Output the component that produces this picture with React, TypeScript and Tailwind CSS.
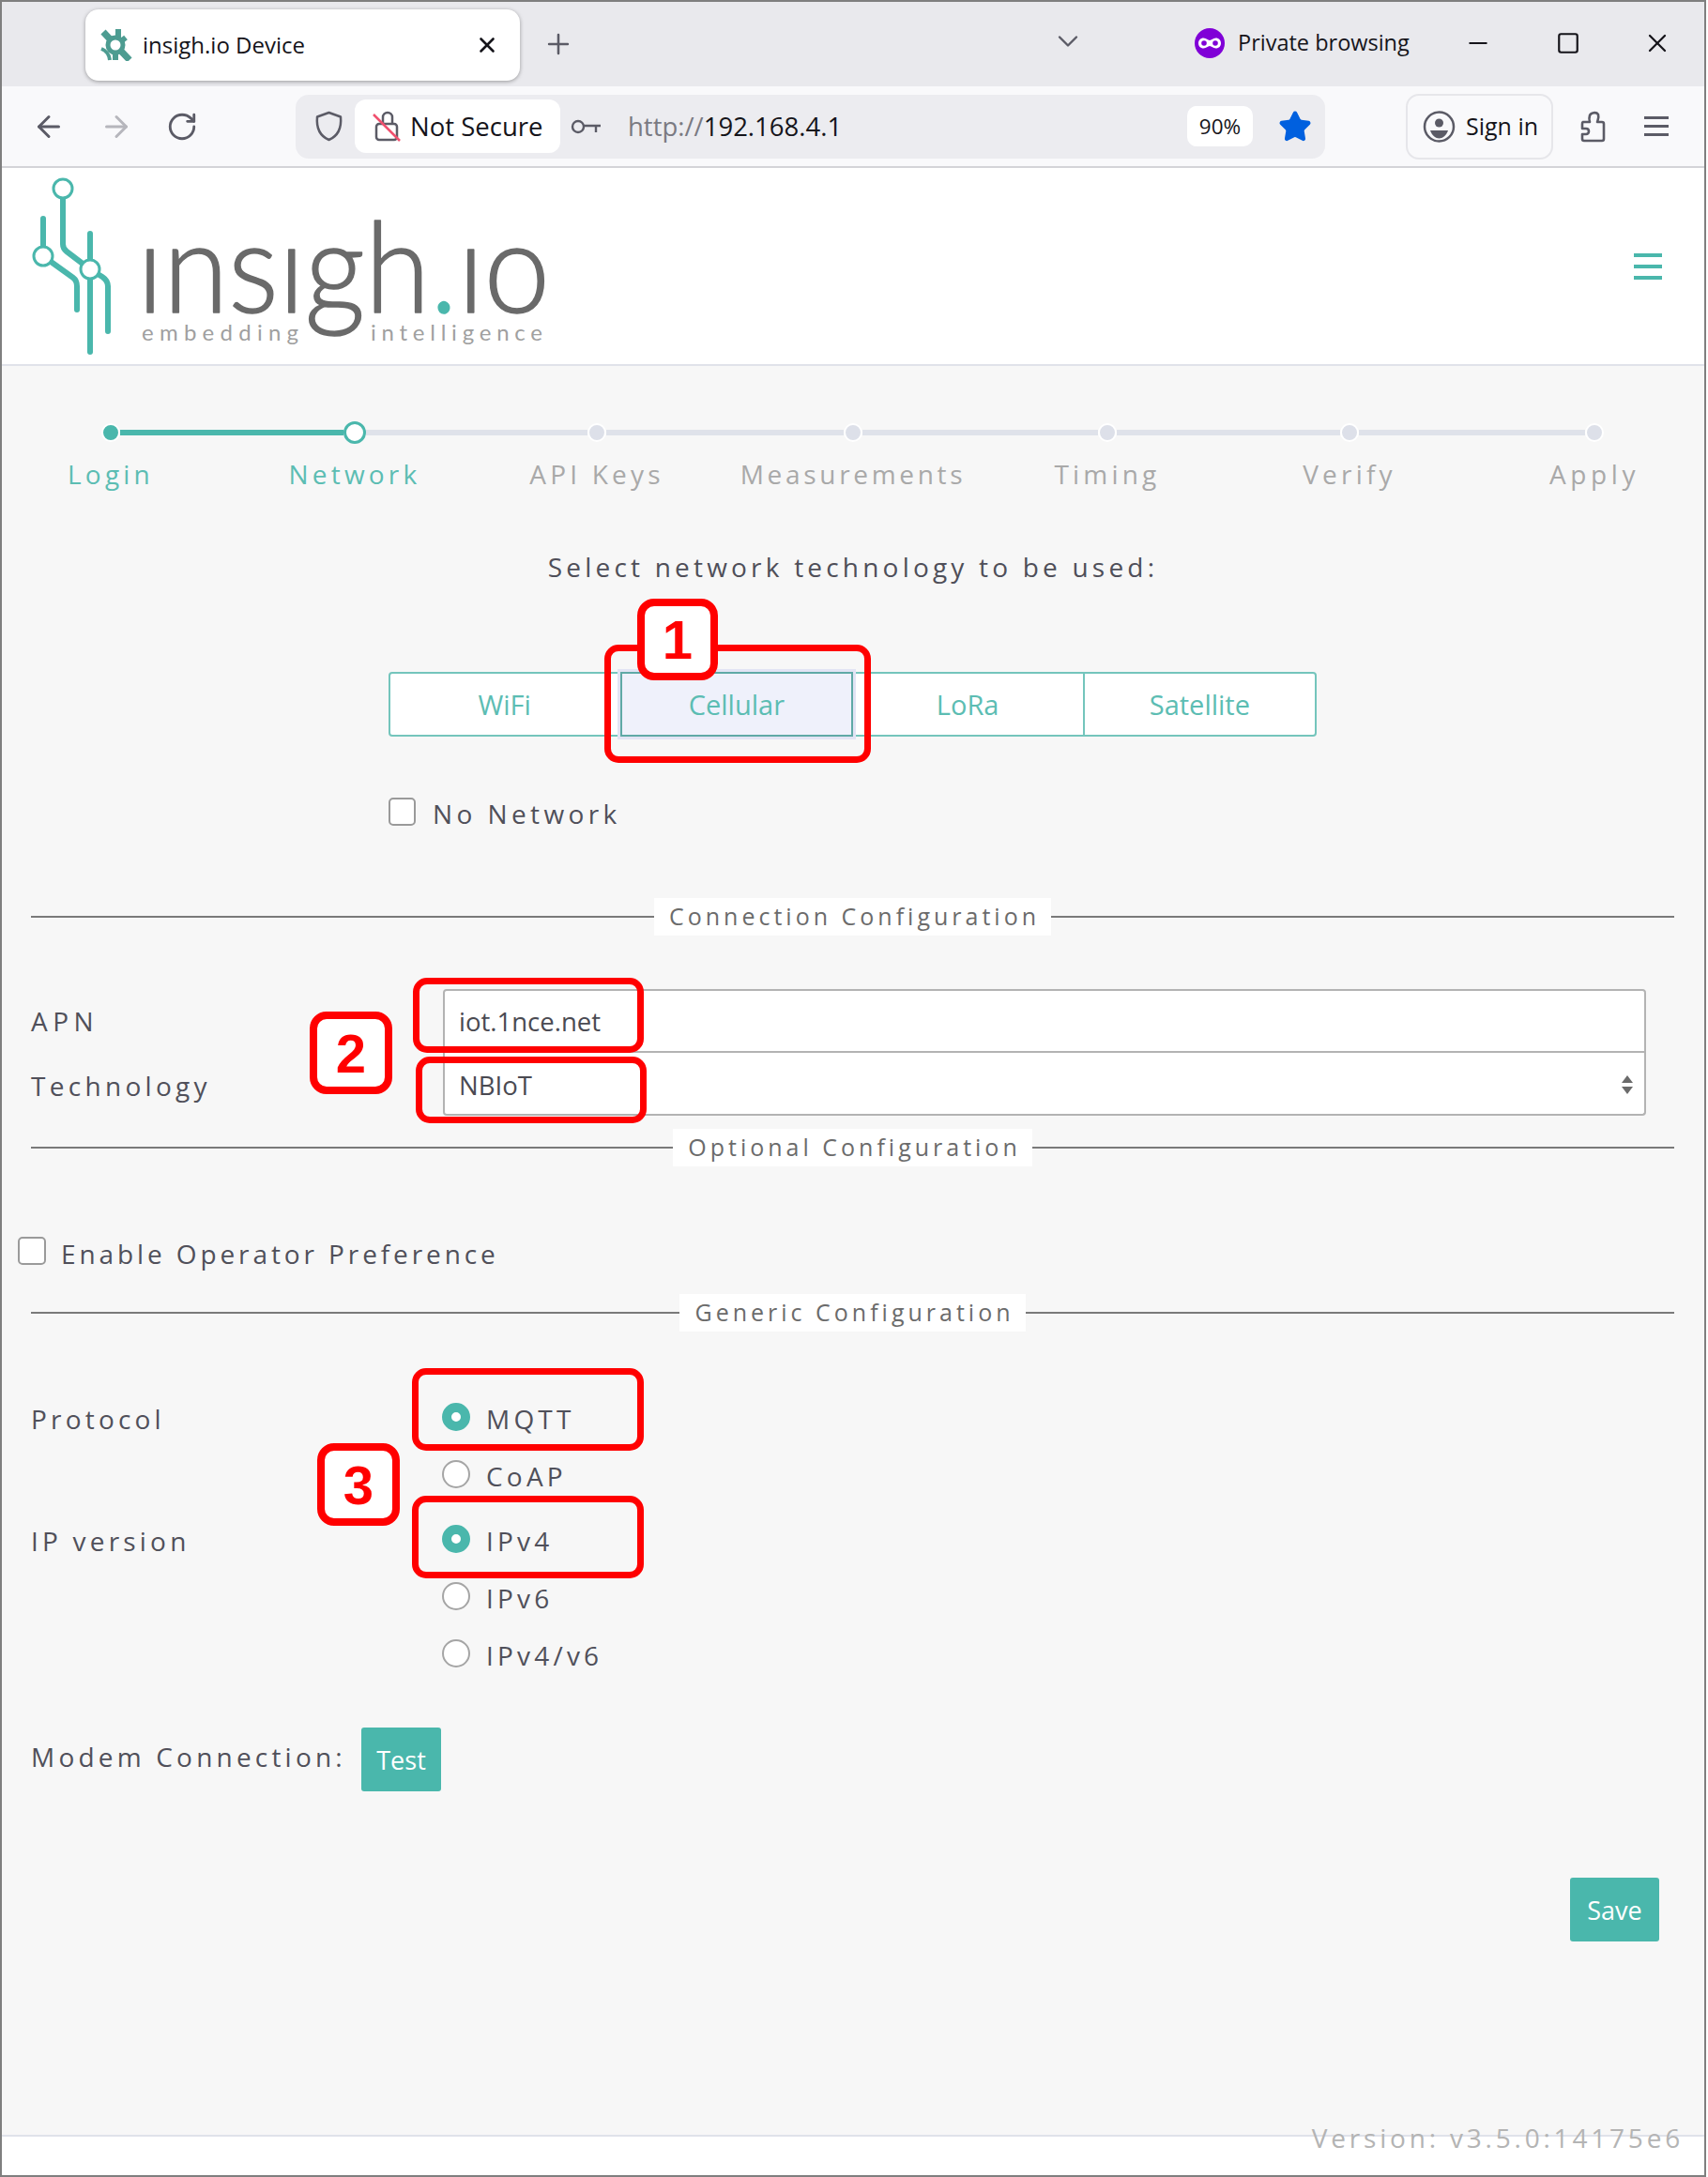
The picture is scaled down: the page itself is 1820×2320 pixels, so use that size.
import React from 'react';
import { ArrowLeft, ArrowRight, ChevronDown, Minus, Plus, RotateCw, Square, Star, X } from 'lucide-react';

const TEAL = '#4ab7ac';

const sans = { fontFamily: '"Open Sans", "Noto Sans", sans-serif' };

const steps = [
  { label: 'Login', gap: 'ml-0', color: 'text-[#5cbdb3] tracking-[4.2px]' },
  { label: 'Network', gap: 'ml-[90px]', color: 'text-[#5cbdb3] tracking-[4.2px]' },
  { label: 'API Keys', gap: 'ml-[88px]', color: 'text-[#a9a9a9] tracking-[4.2px]' },
  { label: 'Measurements', gap: 'ml-[103px]', color: 'text-[#a9a9a9] tracking-[3.7px]' },
  { label: 'Timing', gap: 'ml-[101px]', color: 'text-[#a9a9a9] tracking-[4.2px]' },
  { label: 'Verify', gap: 'ml-[88px]', color: 'text-[#a9a9a9] tracking-[4.2px]' },
  { label: 'Apply', gap: 'ml-[91px]', color: 'text-[#a9a9a9] tracking-[4.6px]' },
];

function Favicon() {
  return (
    <svg width="34" height="34" viewBox="0 0 34 34" fill="none" stroke="#4d9c91">
      <path d="M3 3L16 17L31 33" strokeWidth="7" />
      <path d="M19 0V10M27 9L22 13M16 26V33" strokeWidth="6" />
      <path d="M1 21Q9 24 10 33" strokeWidth="4" />
      <circle cx="16" cy="17" r="8" fill="#fff" strokeWidth="5" />
    </svg>
  );
}

function ShieldIcon() {
  return (
    <svg width="31" height="33" viewBox="0 0 31 33" fill="none" stroke="#5b5b66" strokeWidth="2.5">
      <path d="M15.5 2 L28 6.5 C29 18 25 27 15.5 31 C6 27 2 18 3 6.5 Z" strokeLinejoin="round" />
    </svg>
  );
}

function BrokenLock() {
  return (
    <svg width="30" height="33" viewBox="0 0 30 33" fill="none">
      <path d="M11 14V7a5 5 0 0 1 10 0v7" stroke="#5b5b66" strokeWidth="2.5" />
      <rect x="4" y="14" width="22" height="17" rx="3" stroke="#5b5b66" strokeWidth="2.5" />
      <path d="M1 4 L29 32" stroke="#f0506e" strokeWidth="2.5" />
    </svg>
  );
}

function KeyIcon() {
  return (
    <svg width="33" height="16" viewBox="0 0 33 16" fill="none" stroke="#5b5b66" strokeWidth="2.4">
      <circle cx="8" cy="8" r="6" />
      <path d="M14 7h18M27 7v7" />
    </svg>
  );
}

function PrivateMask() {
  return (
    <svg width="32" height="32" viewBox="0 0 32 32">
      <circle cx="16" cy="16" r="16" fill="#8000d7" />
      <path d="M9.5 10.5c3 0 4.5 2.5 6.5 2.5s3.500-2.500 6.500-2.500c3.500 0 5.500 2.500 5.500 5.500s-2 5.500-5.500 5.500c-3 0-4.500-2.500-6.500-2.500s-3.500 2.500-6.500 2.500C6 21.500 4 19 4 16s2-5.500 5.500-5.500z" fill="#fff" />
      <circle cx="10" cy="16" r="2.800" fill="#8000d7" />
      <circle cx="22" cy="16" r="2.800" fill="#8000d7" />
    </svg>
  );
}

function AccountIcon() {
  return (
    <svg width="35" height="34" viewBox="0 0 35 34" fill="none">
      <circle cx="17.500" cy="17" r="15.500" stroke="#5b5b66" strokeWidth="2.5" />
      <circle cx="17.500" cy="13" r="4.500" fill="#5b5b66" />
      <path d="M8 21h19c-1.500 5-6 8.500-9.500 8.500S9.500 26 8 21z" fill="#5b5b66" />
    </svg>
  );
}

function PuzzleIcon() {
  return (
    <svg width="28" height="34" viewBox="0 0 28 34" fill="none" stroke="#5b5b66" strokeWidth="2.6" strokeLinejoin="round">
      <path d="M4 12H11c-1-3-1-4 0-7c1-3 7-4 9-1c1 3 0 5-1 8H24a2 2 0 0 1 2 2V30a2 2 0 0 1-2 2H5a2 2 0 0 1-2-2V25H7c4 0 4-6 0-6H3V14a2 2 0 0 1 1-2z" />
    </svg>
  );
}

function Logo() {
  return (
    <svg width="600" height="209" viewBox="0 0 600 209" className="-mt-[1px]">
      {/* coordinates below are page pixels, the svg itself starts at x=2, y=178 */}
      <g transform="translate(-2 -178)" fill="none" stroke={TEAL} strokeWidth="6" strokeLinecap="round" strokeLinejoin="round">
        <path d="M67 212V260q0 5 4 8L96 287" />
        <path d="M46 233V263" />
        <path d="M46 273L78 296q4 3 4 9V330" />
        <path d="M96 249V375" />
        <path d="M96 287L109 295q6 4 6 10V353" />
        <circle cx="67" cy="201" r="10" fill="#fff" strokeWidth="3" />
        <circle cx="46" cy="273" r="10" fill="#fff" strokeWidth="3" />
        <circle cx="96" cy="287" r="10" fill="#fff" strokeWidth="3" />
        <g stroke="none" style={{ fontFamily: 'Lato, sans-serif' }}>
          <text x="146" y="333" fontSize="134" fontWeight="300" fill="#6a6a6a" stroke="#6a6a6a" strokeWidth="1.5" textLength="440" lengthAdjust="spacingAndGlyphs">
            ınsıgh<tspan fill={TEAL} stroke={TEAL}>.</tspan>ıo
          </text>
          <text x="151" y="363" fontSize="24" fill="#a0a0a0" textLength="167">embedding</text>
          <text x="395" y="363" fontSize="24" fill="#a0a0a0" textLength="183">intelligence</text>
        </g>
      </g>
    </svg>
  );
}

function Section({ title, className }: { title: string; className: string }) {
  return (
    <div className={`flex items-center ml-[31px] mr-[32px] ${className}`}>
      <div className="h-[2px] flex-1 bg-[#7a7a7a]" />
      <div className="h-10 pl-[16px] pr-[12px] flex items-center bg-white text-[25px] tracking-[4px] text-[#6b6b6b]">{title}</div>
      <div className="h-[2px] flex-1 bg-[#7a7a7a]" />
    </div>
  );
}

function Radio({ label, checked }: { label: string; checked?: boolean }) {
  return (
    <label className="h-[61px] flex items-center">
      <input
        type="radio"
        readOnly
        checked={!!checked}
        className={
          checked
            ? 'appearance-none w-[30px] h-[30px] rounded-full bg-white border-[10px] border-[#4ab7ac]'
            : 'appearance-none w-[30px] h-[30px] rounded-full bg-white border-2 border-[#a5a5a5]'
        }
      />
      <span className="ml-[17px] mt-[4px] text-[28px] tracking-[4.2px] text-[#50505a]">{label}</span>
    </label>
  );
}

function Annotation({ className }: { className: string }) {
  return <div className={`absolute border-[7px] border-[#ff0000] rounded-[15px] ${className}`} />;
}

function Tag({ n, className }: { n: string; className: string }) {
  return (
    <div
      className={`absolute flex items-center justify-center bg-white border-[8px] border-[#ff0000] rounded-[18px] text-[#ff0000] text-[58px] font-bold ${className}`}
      style={{ fontFamily: '"Liberation Sans", Arial, sans-serif' }}
    >
      {n}
    </div>
  );
}

export default function App() {
  return (
    <div className="relative w-[1818px] h-[2320px] border-2 border-[#7f7f7f] bg-white flex flex-col overflow-hidden" style={sans}>
      {/* Tab strip */}
      <div className="h-[90px] shrink-0 bg-[#e9e9ed] flex items-center text-[#15141a]">
        <div className="ml-[89px] mt-[2px] w-[463px] h-[76px] rounded-[14px] bg-white shadow-[0_1px_4px_rgba(0,0,0,0.35)] flex items-center pl-[16px]">
          <Favicon />
          <span className="ml-[11px] text-[24px]">insigh.io Device</span>
          <X className="ml-auto mr-[22px]" size={26} strokeWidth={2.4} />
        </div>
        <Plus className="ml-[24px]" size={34} strokeWidth={1.8} color="#5b5b66" />
        <ChevronDown className="ml-[508px] -mt-[6px]" size={36} strokeWidth={1.6} color="#5b5b66" />
        <div className="ml-[117px] -mt-[2px]"><PrivateMask /></div>
        <span className="ml-[14px] -mt-[2px] text-[23.5px]">Private browsing</span>
        <Minus className="ml-[58px] -mt-[2px]" size={30} strokeWidth={1.6} />
        <Square className="ml-[68px] -mt-[2px]" size={26} strokeWidth={2} />
        <X className="ml-[66px] -mt-[2px]" size={32} strokeWidth={1.7} />
      </div>

      {/* Toolbar */}
      <div className="h-[87px] shrink-0 bg-[#f9f9fb] border-b-2 border-[#d4d4d8] flex items-center">
        <ArrowLeft className="ml-[32px]" size={36} strokeWidth={2} color="#5b5b66" />
        <ArrowRight className="ml-[36px]" size={36} strokeWidth={2} color="#b6b6bc" />
        <RotateCw className="ml-[35px]" size={34} strokeWidth={2} color="#5b5b66" />
        <div className="ml-[104px] w-[1097px] h-[68px] rounded-[14px] bg-[#ececf0] flex items-center">
          <div className="ml-[20px]"><ShieldIcon /></div>
          <div className="ml-[12px] w-[219px] h-[57px] rounded-[12px] bg-white flex items-center pl-[19px]">
            <BrokenLock />
            <span className="ml-[10px] text-[27.5px] text-[#15141a] whitespace-nowrap">Not Secure</span>
          </div>
          <div className="ml-[11px]"><KeyIcon /></div>
          <span className="ml-[28px] text-[27.5px] text-[#7a7a82]">
            http://<span className="text-[#15141a]">192.168.4.1</span>
          </span>
          <div className="ml-auto w-[70px] h-[43px] rounded-[10px] bg-white flex items-center justify-center text-[22.5px] text-[#15141a]">90%</div>
          <Star className="ml-[27px] mr-[14px]" size={36} fill="#0060df" color="#0060df" strokeWidth={2} />
        </div>
        <div className="ml-[86px] w-[157px] h-[70px] rounded-[14px] border-2 border-[#e6e6ea] flex items-center pl-[16px]">
          <AccountIcon />
          <span className="ml-[11px] text-[25px] text-[#15141a] whitespace-nowrap">Sign in</span>
        </div>
        <div className="ml-[28px]"><PuzzleIcon /></div>
        <div className="ml-[41px] w-[26px] h-[21px] flex flex-col justify-between">
          <div className="h-[3px] bg-[#5b5b66]" />
          <div className="h-[3px] bg-[#5b5b66]" />
          <div className="h-[3px] bg-[#5b5b66]" />
        </div>
      </div>

      {/* Header */}
      <div className="h-[211px] shrink-0 bg-white border-b-2 border-[#e0e2ea] relative">
        <Logo />
        <div className="absolute right-[45px] top-[91px] w-[30px] flex flex-col gap-[8px]">
          <div className="h-[4px] bg-[#4ab7ac]" />
          <div className="h-[4px] bg-[#4ab7ac]" />
          <div className="h-[4px] bg-[#4ab7ac]" />
        </div>
      </div>

      {/* Wizard page */}
      <main className="flex-1 bg-[#f7f7f7] flex flex-col">
        <div className="mt-[59px] ml-[106px] h-6 flex items-center">
          <div className="w-[20px] h-[20px] rounded-full bg-[#4ab7ac] border-2 border-white" />
          <div className="w-[238px] h-[6px] bg-[#4ab7ac]" />
          <div className="w-[24px] h-[24px] rounded-full bg-white border-[3px] border-[#4ab7ac]" />
          <div className="w-[236px] h-[6px] bg-[#dfe2ea]" />
          <div className="w-[20px] h-[20px] rounded-full bg-[#dde0e9] border-2 border-white" />
          <div className="w-[253px] h-[6px] bg-[#dfe2ea]" />
          <div className="w-[20px] h-[20px] rounded-full bg-[#dde0e9] border-2 border-white" />
          <div className="w-[251px] h-[6px] bg-[#dfe2ea]" />
          <div className="w-[20px] h-[20px] rounded-full bg-[#dde0e9] border-2 border-white" />
          <div className="w-[238px] h-[6px] bg-[#dfe2ea]" />
          <div className="w-[20px] h-[20px] rounded-full bg-[#dde0e9] border-2 border-white" />
          <div className="w-[241px] h-[6px] bg-[#dfe2ea]" />
          <div className="w-[20px] h-[20px] rounded-full bg-[#dde0e9] border-2 border-white" />
        </div>
        <div className="mt-[12px] ml-[31px] h-10 flex items-center">
          {steps.map((s) => (
            <div key={s.label} className={`w-[170px] shrink-0 text-center text-[28px] whitespace-nowrap flex justify-center ${s.gap} ${s.color}`}>
              {s.label}
            </div>
          ))}
        </div>

        <div className="mt-[59px] h-10 flex items-center justify-center text-[28px] tracking-[4.2px] text-[#4f4f59]">
          Select network technology to be used:
        </div>

        <div className="mt-[92px] ml-[412px] w-[989px] h-[69px] grid grid-cols-4 text-[29px] text-[#5cbdb3]">
          <button className="border-2 border-[#74c5bc] rounded-l-[4px] bg-white">WiFi</button>
          <button className="border-2 border-[#5fa9a6] bg-[#eff1fb] shadow-[0_0_0_3px_#e2e4f4] relative">Cellular</button>
          <button className="border-y-2 border-r-2 border-[#74c5bc] bg-white">LoRa</button>
          <button className="border-y-2 border-r-2 border-[#74c5bc] rounded-r-[4px] bg-white">Satellite</button>
        </div>

        <label className="mt-[64px] ml-[412px] h-[31px] flex items-center">
          <input type="checkbox" readOnly className="appearance-none w-[29px] h-[30px] rounded-[5px] bg-white border-2 border-[#9a9a9a]" />
          <span className="ml-[18px] mt-[4px] text-[28px] tracking-[4.4px] text-[#50505a]">No Network</span>
        </label>

        <Section title="Connection Configuration" className="mt-[77px]" />

        <div className="mt-[57px] ml-[31px] mr-[62px] grid grid-cols-[439px_1fr] text-[28px] text-[#50505a]">
          <div className="h-[68px] flex items-center tracking-[5.5px]">APN</div>
          <input
            readOnly
            value="iot.1nce.net"
            className="h-[68px] w-full px-[15px] bg-white border-2 border-[#b3b3b3] rounded-t-[4px] text-[27.5px] text-[#4a4a52]"
          />
          <div className="h-[67px] flex items-center pt-[2px] tracking-[4.3px]">Technology</div>
          <div className="relative h-[67px]">
            <select className="appearance-none h-full w-full px-[15px] pt-[4px] bg-white border-2 border-t-0 border-[#b3b3b3] rounded-b-[4px] text-[27.5px] text-[#4a4a52]">
              <option>NBIoT</option>
            </select>
            <svg className="absolute right-[13px] top-[23px]" width="14" height="22" viewBox="0 0 14 22" fill="#6b6b6b">
              <path d="M7 1l6 8H1zM7 21l6-8H1z" />
            </svg>
          </div>
        </div>

        <Section title="Optional Configuration" className="mt-[14px]" />

        <label className="mt-[75px] ml-[17px] h-[30px] flex items-center">
          <input type="checkbox" readOnly className="appearance-none w-[30px] h-[30px] rounded-[5px] bg-white border-2 border-[#9a9a9a]" />
          <span className="ml-[16px] mt-[6px] text-[28px] tracking-[3.9px] text-[#50505a]">Enable Operator Preference</span>
        </label>

        <Section title="Generic Configuration" className="mt-[31px]" />

        <div className="mt-[60px] ml-[31px] grid grid-cols-[438px_1fr] gap-y-[8px] text-[28px] tracking-[4.2px] text-[#50505a]">
          <div className="h-[61px] flex items-center pt-[5px]">Protocol</div>
          <div>
            <Radio label="MQTT" checked />
            <Radio label="CoAP" />
          </div>
          <div className="h-[61px] flex items-center pt-[5px]">IP version</div>
          <div>
            <Radio label="IPv4" checked />
            <Radio label="IPv6" />
            <Radio label="IPv4/v6" />
          </div>
        </div>

        <div className="mt-[49px] ml-[31px] flex items-center">
          <span className="w-[352px] -mt-[6px] text-[28px] tracking-[4.2px] text-[#50505a] whitespace-nowrap">Modem Connection:</span>
          <button className="w-[85px] h-[68px] pt-[2px] rounded-[3px] bg-[#4ab7ac] text-white text-[27px]">Test</button>
        </div>

        <div className="mt-[92px] mr-[48px] flex justify-end">
          <button className="w-[95px] h-[68px] pt-[2px] rounded-[3px] bg-[#4ab7ac] text-white text-[27px]">Save</button>
        </div>
      </main>

      {/* Footer */}
      <footer className="relative h-[43px] shrink-0 bg-white border-t-2 border-[#e0e2ea]">
        <span className="absolute right-[22px] -top-[20px] text-[28px] tracking-[3.8px] text-[#b4b4b4] whitespace-nowrap">Version: v3.5.0:14175e6</span>
      </footer>

      {/* Red callouts on top of the capture; offsets are relative to the 2px window frame */}
      <Annotation className="left-[642px] top-[685px] w-[284px] h-[126px]" />
      <Tag n="1" className="left-[677px] top-[636px] w-[86px] h-[87px]" />
      <Annotation className="left-[438px] top-[1040px] w-[246px] h-[80px]" />
      <Annotation className="left-[441px] top-[1124px] w-[246px] h-[71px]" />
      <Tag n="2" className="left-[328px] top-[1076px] w-[88px] h-[88px]" />
      <Annotation className="left-[437px] top-[1456px] w-[247px] h-[88px]" />
      <Annotation className="left-[437px] top-[1592px] w-[247px] h-[88px]" />
      <Tag n="3" className="left-[336px] top-[1536px] w-[88px] h-[88px]" />
    </div>
  );
}
